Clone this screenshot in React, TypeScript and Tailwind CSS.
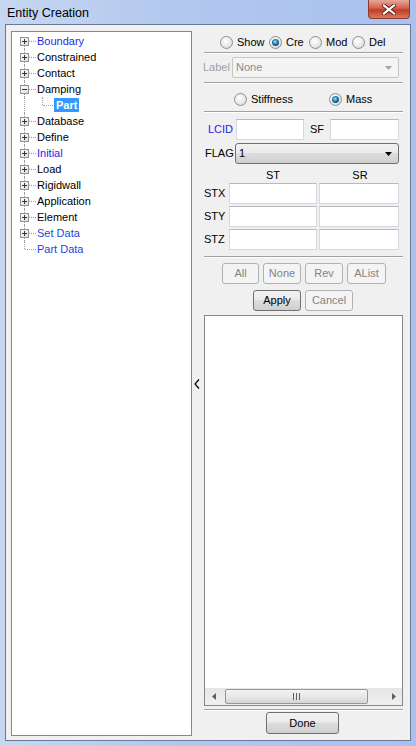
import React from "react";

type TreeItem = { t: string; blue?: boolean; box?: "+" | "-" | null };

const items: TreeItem[] = [
  { t: "Boundary", blue: true, box: "+" },
  { t: "Constrained", box: "+" },
  { t: "Contact", box: "+" },
  { t: "Damping", box: "-" },
  { t: "Part", box: null },
  { t: "Database", box: "+" },
  { t: "Define", box: "+" },
  { t: "Initial", blue: true, box: "+" },
  { t: "Load", box: "+" },
  { t: "Rigidwall", box: "+" },
  { t: "Application", box: "+" },
  { t: "Element", box: "+" },
  { t: "Set Data", blue: true, box: "+" },
  { t: "Part Data", blue: true, box: null },
];

const ExpandBox = ({ sign }: { sign: "+" | "-" }) => (
  <div className="absolute left-[4px] top-[4px] w-[9px] h-[9px] border border-[#919191] bg-[linear-gradient(135deg,#ffffff,#dcdcdc)] flex items-center justify-center">
    <svg width="7" height="7" viewBox="0 0 7 7">
      <rect x="1" y="3" width="5" height="1" fill="#1e395b" />
      {sign === "+" && <rect x="3" y="1" width="1" height="5" fill="#1e395b" />}
    </svg>
  </div>
);

const Tree = () => (
  <div className="w-[181px] bg-white border border-[#828790] pt-[1px] pl-[4px]">
    {items.map((it, i) => {
      const first = i === 0;
      const last = i === items.length - 1;
      if (it.t === "Part") {
        return (
          <div key={i} className="h-[16px] flex items-center">
            <div className="relative w-[38px] h-full">
              <div className="absolute left-[8px] top-0 bottom-0 border-l border-dotted border-[#a0a0a0]" />
              <div className="absolute left-[26px] top-0 h-[8px] border-l border-dotted border-[#a0a0a0]" />
              <div className="absolute left-[27px] top-[8px] w-[10px] border-t border-dotted border-[#a0a0a0]" />
            </div>
            <span className="bg-[#3399ff] text-white font-bold px-[2px] leading-[14px]">Part</span>
          </div>
        );
      }
      return (
        <div key={i} className="h-[16px] flex items-center">
          <div className="relative w-[21px] h-full">
            <div
              className={
                "absolute left-[8px] border-l border-dotted border-[#a0a0a0] " +
                (first ? "top-[8px] bottom-0" : last ? "top-0 h-[8px]" : "top-0 bottom-0")
              }
            />
            <div className="absolute left-[9px] top-[8px] w-[11px] border-t border-dotted border-[#a0a0a0]" />
            {it.box && <ExpandBox sign={it.box} />}
          </div>
          <span className={it.blue ? (i > 11 ? "text-[#2346e0]" : "text-[#1f1fe8]") : "text-black"}>{it.t}</span>
        </div>
      );
    })}
  </div>
);

const Radio = ({ on }: { on?: boolean }) => (
  <div className="w-[13px] h-[13px] rounded-full border border-[#8e8f8f] bg-[radial-gradient(circle_at_40%_35%,#ffffff,#e6e6e6_60%,#cfcfcf)] flex items-center justify-center shrink-0">
    {on && (
      <div className="w-[7px] h-[7px] rounded-full bg-[radial-gradient(circle_at_45%_40%,#9be8ff,#1f78a8_45%,#0b2c46)]" />
    )}
  </div>
);

const Sep = () => (
  <div className="ml-[2px] mr-[1px] h-[2px] border-t border-[#a0a0a0] border-b border-b-white" />
);

const Input = ({ w }: { w: string }) => (
  <div className={w + " h-[21px] bg-white border border-[#d5d9df] border-t-[#b5bac2]"} />
);

const Btn = ({ label, w, disabled }: { label: string; w: string; disabled?: boolean }) => (
  <div
    className={
      w +
      " h-[21px] rounded-[3px] border flex items-center justify-center " +
      (disabled
        ? "border-[#adb2b5] bg-[#f4f4f4] text-[#838383]"
        : "border-[#707070] bg-[linear-gradient(#f2f2f2,#ebebeb_45%,#dddddd_50%,#cfcfcf)] text-black")
    }
  >
    {label}
  </div>
);

const Arrow = ({ color }: { color: string }) => (
  <svg width="7" height="4" viewBox="0 0 7 4">
    <path d="M0 0H7L3.5 4Z" fill={color} />
  </svg>
);

export default function App() {
  return (
    <div className="w-[416px] h-[746px] flex flex-col bg-[linear-gradient(90deg,#c6d7f1,#b3c8ee_40%,#a8c1ef)] font-['Liberation_Sans',Arial,sans-serif] text-[11px] text-black overflow-hidden">
      {/* title bar */}
      <div className="h-[24px] flex items-start shrink-0">
        <div className="pl-[7px] pt-[4px] text-[12.5px] text-black">Entity Creation</div>
        <div className="ml-auto mr-[6px] w-[42px] h-[19px] rounded-b-[4px] border border-t-0 border-[#8c3b2f] bg-[linear-gradient(#e8a898,#d2634c_45%,#c13c24_55%,#d77a63)] flex items-center justify-center">
          <svg width="14" height="11" viewBox="0 0 14 11">
            <path d="M2 1.5L12 9.5M12 1.5L2 9.5" stroke="#5a2018" strokeWidth="4" strokeLinecap="square" />
            <path d="M2 1.5L12 9.5M12 1.5L2 9.5" stroke="#ffffff" strokeWidth="2.2" strokeLinecap="square" />
          </svg>
        </div>
      </div>

      {/* content */}
      <div className="flex-1 mx-[5px] mb-[5px] border border-[#6b7a94] bg-[#f0f0f0] flex pt-[6px] pb-[4px] pl-[5px] pr-[6px]">
        <Tree />

        {/* collapse strip */}
        <div className="w-[10px] flex items-center pl-[2px]">
          <svg width="6" height="10" viewBox="0 0 6 10">
            <path d="M5 0.5L1 5L5 9.5" stroke="#000" strokeWidth="1.2" fill="none" />
          </svg>
        </div>

        {/* right panel */}
        <div className="w-[202px] flex flex-col">
          <div className="mt-[2px] h-[18px] flex items-center ml-[18px]">
            <div className="w-[49px] flex items-center gap-[4px]"><Radio /><span>Show</span></div>
            <div className="w-[40px] flex items-center gap-[4px]"><Radio on /><span>Cre</span></div>
            <div className="w-[43px] flex items-center gap-[4px]"><Radio /><span>Mod</span></div>
            <div className="flex items-center gap-[4px]"><Radio /><span>Del</span></div>
          </div>
          <div className="mt-[1px]"><Sep /></div>

          <div className="mt-[3px] h-[21px] flex items-center ml-[1px]">
            <span className="text-[#a0a0a0] w-[29px]">Label</span>
            <div className="w-[167px] h-[21px] rounded-[2px] border border-[#c6c6c6] bg-[#f4f4f4] flex items-center pl-[3px] pr-[6px] text-[#8b8b8b]">
              <span>None</span>
              <div className="ml-auto"><Arrow color="#a5a5a5" /></div>
            </div>
          </div>
          <div className="mt-[4px]"><Sep /></div>

          <div className="mt-[6px] h-[18px] flex items-center ml-[32px]">
            <div className="w-[95px] flex items-center gap-[4px]"><Radio /><span>Stiffness</span></div>
            <div className="flex items-center gap-[4px]"><Radio on /><span>Mass</span></div>
          </div>
          <div className="mt-[3px]"><Sep /></div>

          <div className="mt-[6px] h-[21px] flex items-center">
            <span className="ml-[6px] w-[28px] text-[#1f1fe8]">LCID</span>
            <Input w="w-[68px]" />
            <span className="ml-[6px] w-[20px]">SF</span>
            <Input w="w-[69px]" />
          </div>

          <div className="mt-[3px] h-[21px] flex items-center">
            <span className="ml-[3px] w-[30px]">FLAG</span>
            <div className="w-[164px] h-[21px] rounded-[3px] border border-[#707070] bg-[linear-gradient(#f2f2f2,#ebebeb_45%,#dddddd_50%,#cfcfcf)] flex items-center pl-[3px] pr-[6px]">
              <span>1</span>
              <div className="ml-auto"><Arrow color="#000" /></div>
            </div>
          </div>

          <div className="mt-[4px] h-[14px] flex items-center ml-[27px]">
            <span className="w-[88px] text-center">ST</span>
            <span className="ml-[3px] w-[80px] text-center">SR</span>
          </div>

          {["STX", "STY", "STZ"].map((l, i) => (
            <div key={l} className={(i === 0 ? "mt-[1px]" : "mt-[2px]") + " h-[21px] flex items-center"}>
              <span className="ml-[2px] w-[25px]">{l}</span>
              <Input w="w-[88px]" />
              <div className="w-[2px]" />
              <Input w="w-[80px]" />
            </div>
          ))}

          <div className="mt-[6px]"><Sep /></div>

          <div className="mt-[5px] flex ml-[20px] gap-[4px]">
            <Btn label="All" w="w-[37px]" disabled />
            <Btn label="None" w="w-[38px]" disabled />
            <Btn label="Rev" w="w-[38px]" disabled />
            <Btn label="AList" w="w-[39px]" disabled />
          </div>
          <div className="mt-[6px] flex ml-[51px] gap-[4px]">
            <Btn label="Apply" w="w-[48px]" />
            <Btn label="Cancel" w="w-[48px]" disabled />
          </div>

          <div className="mt-[4px] ml-[2px] mr-[1px] flex-1 bg-white border border-[#828790] flex flex-col justify-end">
            <div className="h-[17px] bg-[linear-gradient(#e5e5e5,#f0f0f0)] flex items-center">
              <div className="w-[17px] h-full flex items-center justify-center">
                <svg width="4" height="7" viewBox="0 0 4 7"><path d="M4 0V7L0 3.5Z" fill="#606060" /></svg>
              </div>
              <div className="ml-[3px] w-[143px] h-[15px] rounded-[2px] border border-[#979797] bg-[linear-gradient(#f3f3f3,#e8e8e8_50%,#d6d6d6)] flex items-center justify-center">
                <svg width="8" height="7" viewBox="0 0 8 7">
                  <rect x="0" y="0" width="1" height="7" fill="#606060" />
                  <rect x="3" y="0" width="1" height="7" fill="#606060" />
                  <rect x="6" y="0" width="1" height="7" fill="#606060" />
                </svg>
              </div>
              <div className="ml-auto w-[17px] h-full flex items-center justify-center">
                <svg width="4" height="7" viewBox="0 0 4 7"><path d="M0 0V7L4 3.5Z" fill="#606060" /></svg>
              </div>
            </div>
          </div>

          <div className="mt-[3px]"><Sep /></div>
          <div className="mt-[1px] flex ml-[64px]">
            <div className="w-[73px] h-[22px] rounded-[3px] border border-[#707070] bg-[linear-gradient(#f2f2f2,#ebebeb_45%,#dddddd_50%,#cfcfcf)] flex items-center justify-center">
              Done
            </div>
          </div>
          <div className="h-[2px]" />
        </div>
      </div>
    </div>
  );
}
